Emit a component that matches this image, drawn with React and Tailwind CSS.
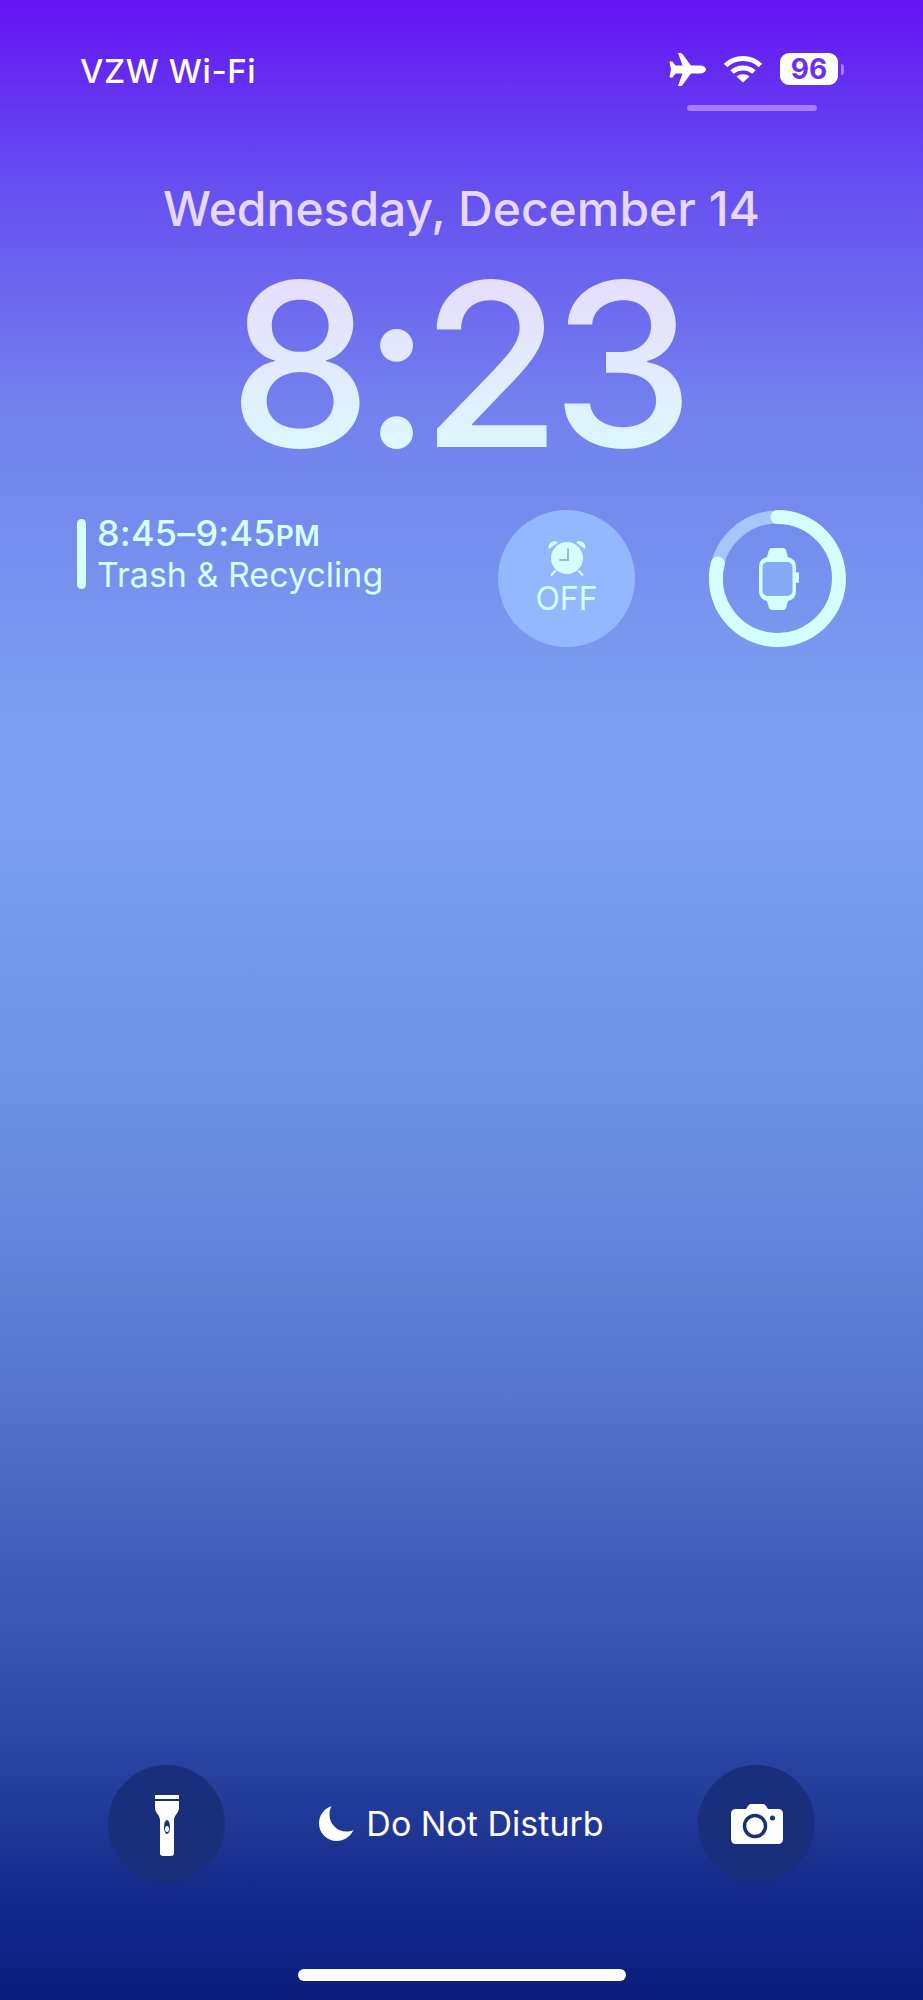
function Plane() {
  return (
    <svg width="37" height="33" viewBox="0 0 37 33" fill="white">
      <path d="M37 16.5C37 14.5 34 12.5 31 12.5H22L13 .5Q12.5 0 12 0H9L13.5 12.5H6.5L3.5 8.5H.5L2 16.5L.5 24.5H3.5L6.5 20.5H13.5L9 33H12Q12.5 33 13 32.5L22 20.5H31C34 20.5 37 18.5 37 16.5Z" />
    </svg>
  );
}

function Wifi() {
  return (
    <svg width="40" height="28" viewBox="0 0 40 28" fill="none" stroke="white" strokeWidth="5">
      <path d="M2.5 10.5C12 1 28 1 37.5 10.5" />
      <path d="M9 17C15 11.5 25 11.5 31 17" />
      <path d="M20 27.5L13.5 21.5C17 18.5 23 18.5 26.5 21.5Z" fill="white" stroke="none" />
    </svg>
  );
}

function AlarmIcon() {
  return (
    <svg width="38" height="36" viewBox="0 0 38 36" className="text-[#d6ffff]">
      <circle cx="19" cy="18" r="16" fill="currentColor" />
      <path d="M1 9C-1 3 6 -1 10 2.5Z" fill="currentColor" />
      <path d="M37 9C39 3 32 -1 28 2.5Z" fill="currentColor" />
      <path d="M7 31L3.5 35M31 31L34.5 35" stroke="currentColor" strokeWidth="2" strokeLinecap="round" />
      <path d="M20 9V20H12" fill="none" stroke="#93b8ff" strokeWidth="2" strokeLinecap="round" />
    </svg>
  );
}

function WatchRing() {
  return (
    <div className="relative flex h-[137px] w-[137px] items-center justify-center">
      <svg width="137" height="137" viewBox="0 0 137 137" fill="none" className="absolute inset-0">
        <circle cx="68.5" cy="68.5" r="61.5" stroke="#a5c5fb" strokeWidth="13" />
        <path
          d="M68.5 7A61.500 61.500 0 1 1 8.800 53.500"
          stroke="#d6ffff"
          strokeWidth="14"
          strokeLinecap="round"
        />
      </svg>
      <svg width="44" height="62" viewBox="0 0 44 62" fill="none">
        <path d="M11 9L13 2Q13.5 0 16 0H27Q29.500 0 30 2L32 9Q40 11 40 19V43Q40 51 32 53L30 60Q29.500 62 27 62H16Q13.500 62 13 60L11 53Q3 51 3 43V19Q3 11 11 9Z" fill="#d6ffff" />
        <rect x="6.500" y="14" width="30" height="34" rx="5" fill="#85abf4" />
        <rect x="40" y="24" width="3" height="11" rx="1.500" fill="#d6ffff" />
      </svg>
    </div>
  );
}

function Flashlight() {
  return (
    <svg width="24" height="61" viewBox="0 0 24 61" fill="white" className="mt-[4px]">
      <rect x="0" y="0" width="24" height="4" />
      <path d="M0 6H24V13C24 18 19 20 19 25V58Q19 61 16 61H8Q5 61 5 58V25C5 20 0 18 0 13Z" />
      <ellipse cx="12" cy="32" rx="3" ry="7" fill="#1a2f7c" />
      <ellipse cx="12" cy="34" rx="2" ry="3" fill="white" />
    </svg>
  );
}

function Camera() {
  return (
    <svg width="52" height="40" viewBox="0 0 52 40" fill="white">
      <path d="M5 5H15L17 2Q18 0 20 0H32Q34 0 35 2L37 5H47Q52 5 52 10V35Q52 40 47 40H5Q0 40 0 35V10Q0 5 5 5Z" />
      <circle cx="24" cy="22" r="10.500" fill="none" stroke="#1a2f7c" strokeWidth="3.500" />
      <circle cx="41.500" cy="14" r="2.500" fill="#1a2f7c" />
    </svg>
  );
}

function Moon() {
  return (
    <svg width="35" height="35" viewBox="0 0 35 35" fill="white">
      <path d="M12.500 0C5 2.500 0 9.500 0 17.500C0 27 8 35 17.500 35C25 35 31.500 30.500 34.500 24C32.500 25 30 25.500 27.500 25.500C18 25.500 10.500 18 10.500 8.500C10.500 5.500 11.200 2.500 12.500 0Z" />
    </svg>
  );
}

export default function App() {
  return (
    <div className="flex h-[2000px] w-full flex-col overflow-hidden bg-[linear-gradient(180deg,#6314f3_0px,#664bf0_170px,#7280ee_400px,#7aa0ef_720px,#7aa0ef_820px,#6a90e2_1120px,#5a7cd0_1340px,#4463bc_1530px,#2d47a2_1740px,#14298a_1900px,#0b1c7c_2000px)] font-['Inter',sans-serif] text-white">
      {/* status bar */}
      <div className="flex items-center justify-between pl-[80px] pr-[79px] pt-[52px]">
        <span className="text-[33px] font-medium leading-[38px] tracking-[0.6px]">VZW Wi-Fi</span>
        <div className="mb-[4px] flex items-center gap-[17px]">
          <Plane />
          <Wifi />
          <div className="flex items-center gap-[3px]">
            <div className="flex h-[32px] w-[58px] items-center justify-center rounded-[9px] bg-white text-[28px] font-bold leading-none text-[#6a2ff0]">
              96
            </div>
            <div className="h-[11px] w-[3px] rounded-r-full bg-[#a67cfb]" />
          </div>
        </div>
      </div>
      <div className="mr-[106px] mt-[15px] h-[6px] w-[130px] self-end rounded-full bg-[#a67cfb]" />

      {/* date and clock */}
      <div className="mt-[70px] text-center text-[48px] font-medium leading-[56px] text-[#e6d8ff]">
        Wednesday, December 14
      </div>
      <div className="mt-[32px] bg-[linear-gradient(180deg,#e6dffc_10%,#dcf6ff_90%)] bg-clip-text pr-[10px] text-center text-[228px] font-[540] leading-[190px] tracking-[-10px] text-transparent">
        8:23
      </div>

      {/* widgets */}
      <div className="mt-[51px] flex items-start pl-[77px] pr-[77px]">
        <div className="mt-[9px] h-[70px] w-[9px] rounded-full bg-[#d6ffff]" />
        <div className="ml-[11px] mt-[2px] text-[#d6ffff]">
          <div className="text-[36px] font-medium leading-[42px] tracking-[0.2px]">
            8:45–9:45<span className="text-[28px] font-semibold">PM</span>
          </div>
          <div className="mt-[-1px] text-[34px] leading-[38px]">Trash &amp; Recycling</div>
        </div>
        <div className="ml-auto flex h-[137px] w-[137px] flex-col items-center rounded-full bg-[#93b8ff] pt-[30px] text-[#d6ffff]">
          <AlarmIcon />
          <span className="mt-[4px] text-[32px] leading-[38px]">OFF</span>
        </div>
        <div className="ml-[74px]">
          <WatchRing />
        </div>
      </div>

      {/* bottom controls */}
      <div className="mt-auto flex items-center pl-[108px] pr-[108px]">
        <div className="flex h-[117px] w-[117px] items-center justify-center rounded-full bg-[#1a2f7c]">
          <Flashlight />
        </div>
        <div className="flex flex-1 items-center justify-center gap-[12px] text-[34px] leading-[40px]">
          <Moon />
          <span>Do Not Disturb</span>
        </div>
        <div className="flex h-[117px] w-[117px] items-center justify-center rounded-full bg-[#1a2f7c]">
          <Camera />
        </div>
      </div>
      <div className="mb-[19px] ml-[298px] mt-[87px] h-[12px] w-[328px] rounded-full bg-white" />
    </div>
  );
}
